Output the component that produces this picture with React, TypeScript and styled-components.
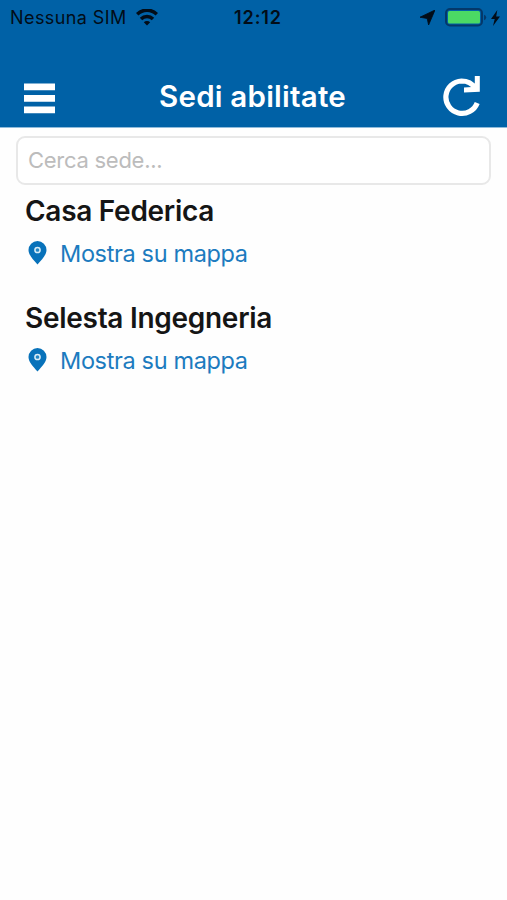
import React, { useState } from "react";
import styled, { createGlobalStyle } from "styled-components";

const GlobalStyle = createGlobalStyle`
  *, *::before, *::after { box-sizing: border-box; }
  body {
    margin: 0;
    background: #fefefe;
    font-family: Inter, "Liberation Sans", sans-serif;
  }
`;

const Screen = styled.div`
  display: flex;
  flex-direction: column;
  height: 900px;
  background: #fefefe;
`;

const Header = styled.header`
  height: 128px;
  background: #0061a6;
  border-bottom: 1px solid #8fbbdb;
`;

const StatusBar = styled.div`
  display: grid;
  grid-template-columns: 1fr auto 1fr;
  align-items: center;
  height: 34px;
  padding: 1px 7px 0 10px;
  color: #020d18;
  font-size: 18px;
  line-height: 33px;
`;

const StatusGroup = styled.div<{ $end?: boolean }>`
  display: flex;
  align-items: center;
  justify-content: ${(p) => (p.$end ? "flex-end" : "flex-start")};
  white-space: nowrap;

  svg { display: block; flex: none; }
`;

const Carrier = styled.span`
  width: 126px;
  letter-spacing: 0.42px;
`;

const Clock = styled.span`
  padding-left: 6px;
  font-weight: 600;
  letter-spacing: 0.9px;
`;

const BatteryGroup = styled.div`
  display: flex;
  align-items: center;
  gap: 4px;
  margin: 0 0 0 10px;
`;

const NavBar = styled.div`
  display: grid;
  grid-template-columns: 60px 1fr 60px;
  align-items: center;
  height: 93px;
  padding: 31px 15px 0 9px;
`;

const IconButton = styled.button<{ $drop?: number }>`
  display: grid;
  place-items: center;
  height: 60px;
  padding: ${(p) => p.$drop ?? 0}px 0 0;
  border: 0;
  background: none;
  color: #fff;
`;

const Title = styled.h1`
  margin: 0;
  padding-left: 4px;
  color: #fff;
  font-size: 29.5px;
  font-weight: 600;
  line-height: 36px;
  letter-spacing: 0.22px;
  text-align: center;
  white-space: nowrap;
`;

const SearchInput = styled.input`
  width: 475px;
  height: 49px;
  margin: 8px 0 0 16px;
  padding: 0 10px 1px;
  border: 2px solid #e8e8e8;
  border-radius: 9px;
  background: #fff;
  color: #151515;
  font: 400 22px Inter, "Liberation Sans", sans-serif;
  letter-spacing: -0.27px;
  outline: none;

  &::placeholder { color: #bcbcbc; opacity: 1; }
`;

const SiteList = styled.ul`
  margin: 0;
  padding: 8px 25px;
  list-style: none;
`;

const Site = styled.li`
  height: 107px;
`;

const SiteName = styled.h2`
  margin: 0;
  color: #151515;
  font-size: 28px;
  font-weight: 600;
  line-height: 36px;
  letter-spacing: -0.28px;
`;

const MapLink = styled.a`
  display: flex;
  align-items: center;
  gap: 13px;
  height: 32px;
  margin-top: 8px;
  padding-left: 3px;
  color: #1c7bbf;
  font-size: 23.5px;
  letter-spacing: -0.35px;
  text-decoration: none;

  svg { display: block; flex: none; }
`;

const WifiIcon = () => (
  <svg width="22" height="17" viewBox="0 0 22 17" fill="none" stroke="currentColor" strokeWidth="3.5">
    <path d="M1.2 5.2a14 14 0 0 1 19.600 0" />
    <path d="M5 9.900a8.600 8.600 0 0 1 12 0" />
    <path d="M11 16.400 7.800 13.300a4.600 4.600 0 0 1 6.400 0Z" fill="currentColor" stroke="none" />
  </svg>
);

const LocationIcon = () => (
  <svg width="15" height="15" viewBox="0 0 15 15">
    <path d="M15 0 8.600 15 7.200 8.500 0 7.200Z" fill="currentColor" stroke="currentColor" strokeWidth=".8" strokeLinejoin="round" />
  </svg>
);

const BatteryIcon = () => (
  <svg width="42" height="20" viewBox="0 0 42 20">
    <rect x="1" y="1" width="36" height="16.500" rx="4" fill="none" stroke="#04386a" strokeWidth="2" />
    <rect x="3" y="3" width="32" height="12.500" rx="1.500" fill="#4bd964" />
    <path d="M39 6.800q2.200.500 2.200 2.700T39 12.200Z" fill="#04386a" />
  </svg>
);

const BoltIcon = () => (
  <svg width="9" height="16" viewBox="0 0 9 16">
    <path d="M6.300 0 0 9h3.700L2 16l7-9.500H5.200Z" fill="currentColor" />
  </svg>
);

const MenuIcon = () => (
  <svg width="31" height="31" viewBox="0 0 31 31" fill="currentColor">
    <path d="M0 .500h31v6.700H0zM0 12h31v6.700H0zM0 23.500h31v6.700H0z" />
  </svg>
);

const RefreshIcon = () => (
  <svg width="38" height="42" viewBox="0 0 38 42">
    <path
      d="M34.200 28A16.200 16.200 0 1 1 18.500 6C24.500 6 29.500 9 32 13"
      fill="none"
      stroke="currentColor"
      strokeWidth="5.200"
    />
    <path d="M31.800 1h5v15.700l-15.800.800v-5l8-.5 2.800-4Z" fill="currentColor" />
  </svg>
);

const PinIcon = () => (
  <svg width="19" height="24" viewBox="0 0 19 24">
    <path d="M9.500 0A9 9 0 0 0 .500 9c0 5 4.600 9.500 9 14.600C13.900 18.500 18.500 14 18.500 9a9 9 0 0 0-9-9Z" fill="#0872ba" />
    <circle cx="9.500" cy="9" r="2.600" fill="#2486c4" stroke="#d9edf7" strokeWidth="1.500" />
  </svg>
);

const sites = ["Casa Federica", "Selesta Ingegneria"];

export default function App() {
  const [query, setQuery] = useState("");
  const visible = sites.filter((name) => name.toLowerCase().includes(query.toLowerCase()));

  return (
    <>
      <GlobalStyle />
      <Screen>
        <Header>
          <StatusBar>
            <StatusGroup>
              <Carrier>Nessuna SIM</Carrier>
              <WifiIcon />
            </StatusGroup>
            <Clock>12:12</Clock>
            <StatusGroup $end>
              <LocationIcon />
              <BatteryGroup>
                <BatteryIcon />
                <BoltIcon />
              </BatteryGroup>
            </StatusGroup>
          </StatusBar>
          <NavBar>
            <IconButton aria-label="Menu" $drop={4}><MenuIcon /></IconButton>
            <Title>Sedi abilitate</Title>
            <IconButton aria-label="Aggiorna"><RefreshIcon /></IconButton>
          </NavBar>
        </Header>
        <SearchInput
          placeholder="Cerca sede..."
          value={query}
          onChange={(e) => setQuery(e.target.value)}
        />
        <SiteList>
          {visible.map((name) => (
            <Site key={name}>
              <SiteName>{name}</SiteName>
              <MapLink href="#">
                <PinIcon />
                Mostra su mappa
              </MapLink>
            </Site>
          ))}
        </SiteList>
      </Screen>
    </>
  );
}
